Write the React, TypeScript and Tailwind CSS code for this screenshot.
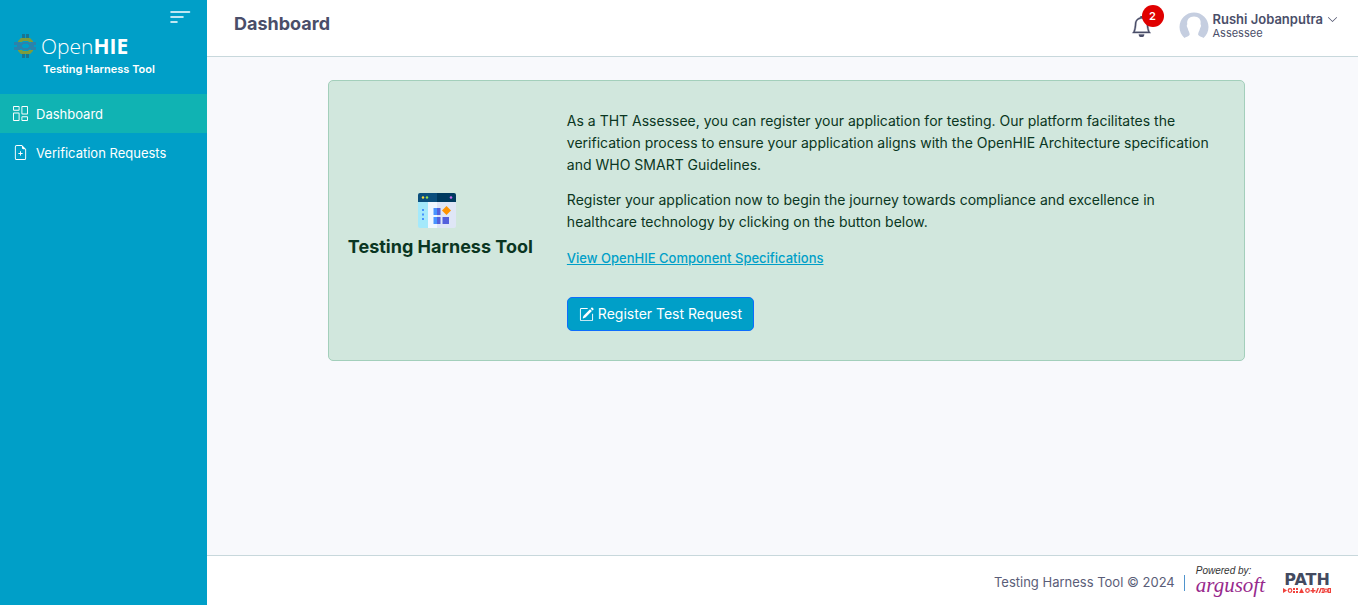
import React from "react";
import {
  BsBell,
  BsChevronDown,
  BsColumnsGap,
  BsFileEarmarkPlus,
  BsPencilSquare,
} from "react-icons/bs";

function WeaveMark() {
  return (
    <svg viewBox="0 0 22 24" className="h-6 w-[22px] shrink-0" aria-hidden="true">
      <g fill="#1b7590">
        <rect x="8" y="0" width="3" height="4" />
        <rect x="12" y="0" width="3" height="4" />
        <rect x="8" y="20" width="3" height="4" />
        <rect x="12" y="20" width="3" height="4" />
      </g>
      <g fill="#2b83ac">
        <path d="M0 8h6v3H0zM0 13h6v3H0zM17 8h5v3h-5zM17 13h5v3h-5z" />
        <path d="M8 8h7v2H8zM8 14h7v2H8zM6 9h3v2H6zM6 13h3v2H6zM14 9h3v2h-3zM14 13h3v2h-3zM3 10h5v4H3zM15 10h5v4h-5z" />
      </g>
      <g fill="#7f9c3c">
        <path d="M7 4h9l3 3v1h-4l-1-1H9L8 8H4V7z" />
        <path d="M7 20h9l3-3v-1h-4l-1 1H9l-1-1H4v1z" />
      </g>
    </svg>
  );
}

function AppWindowIcon() {
  return (
    <svg viewBox="0 0 38 35" className="mr-1.5 h-[35px] w-[38px]" aria-hidden="true">
      <path d="M0 8h10v27H2a2 2 0 0 1-2-2z" fill="#a4e9fb" />
      <path d="M10 8h9v27h-9z" fill="#f0f7ff" />
      <path d="M19 8h19v25a2 2 0 0 1-2 2H19z" fill="#dfe6f6" />
      <path d="M2 0h17v9H0V2a2 2 0 0 1 2-2z" fill="#0b4f7d" />
      <path d="M19 0h17a2 2 0 0 1 2 2v7H19z" fill="#003a5f" />
      <circle cx="5" cy="4.5" r="1.2" fill="#ffd83d" />
      <circle cx="9" cy="4.5" r="1.2" fill="#9be04b" />
      <circle cx="33" cy="4.5" r="1.3" fill="#c86df0" />
      <path d="M4 16h2v2H4zM4 20.500h2v2H4zM4 25h2v2H4z" fill="#4793ff" />
      <path d="M15.500 15H19v7h-3.500zM15.500 24H19v7h-3.500z" fill="#4793ff" />
      <path d="M19 15h3.500v7H19zM19 24h3.500v7H19zM24.500 24h6.500v7h-6.500z" fill="#5460dc" />
      <path d="M28.500 13l4.500 4.500-4.500 4.500-4.500-4.500z" fill="#ff9300" />
    </svg>
  );
}

function Avatar() {
  return (
    <svg viewBox="0 0 30 30" className="size-[30px]" aria-hidden="true">
      <path
        d="M5.500 26C2.500 23.500.5 19.500.5 15a14.500 14.500 0 0 1 29 0c0 4.500-2 8.500-5 11-1.200-1-4-1.600-5.200-3-.7-1 .5-3.400 1.100-4.600.5-1.200.6-1.700.8-2.600.8-.4 1.200-2.800.3-3.500C22.500 7.500 19.500 4.500 15 4.500S7.500 7.500 8.300 12.300c-.9.700-.5 3.100.3 3.500.2.900.3 1.400.8 2.600.6 1.200 1.800 3.600 1.100 4.600-1 1.400-4 2-5 3z"
        fill="#c5cee0"
      />
    </svg>
  );
}

function PathLogo() {
  return (
    <div className="flex w-12 flex-col items-center">
      <span className="font-['DejaVu_Sans',sans-serif] text-[16px] leading-[14px] font-bold text-[#434a60]">
        PATH
      </span>
      <svg viewBox="0 0 48 5" className="mt-px h-[5px] w-12" aria-hidden="true">
        <g fill="#f0423c">
          <path d="M0 0l4 2.500L0 5zM10 0h2v2h-2zM13 0h2v2h-2zM10 3h2v2h-2zM13 3h2v2h-2zM16 5l2.500-5L21 5zM27.500 2h5v1.500h-5zM29.200 0h1.500v5h-1.500zM32.500 5l2-5h1.500l-2 5zM35.500 5l2-5H39l-2 5z" />
        </g>
        <g fill="none" stroke="#f0423c" strokeWidth="1.200">
          <circle cx="7" cy="2.500" r="1.800" />
          <circle cx="24.500" cy="2.500" r="1.800" />
          <path d="M38.500.6h3M38.500 4.400h3M40 .6v3.800" />
          <circle cx="43" cy="2.500" r="1.500" />
          <rect x="45.200" y=".6" width="2.200" height="3.800" />
        </g>
      </svg>
    </div>
  );
}

function Sidebar() {
  return (
    <aside className="flex w-[207px] shrink-0 flex-col bg-[#009fc8] text-white">
      <div className="flex h-[94px] flex-col pl-3.5">
        <button type="button" aria-label="Toggle menu" className="mt-2.5 mr-4 self-end">
          <svg viewBox="0 0 22 14" className="h-3.5 w-[22px]" aria-hidden="true">
            <path
              d="M2 2h18.500M2 7h12M2 12h6"
              stroke="#fff"
              strokeWidth="1.600"
              strokeLinecap="round"
            />
          </svg>
        </button>
        <div className="mt-2.5 flex items-center gap-[5px]">
          <WeaveMark />
          <span className="font-['Open_Sans',sans-serif] text-[21px] leading-6 font-light">
            Open<b className="font-bold">HIE</b>
          </span>
        </div>
        <span className="mt-[3px] ml-[29px] text-[11px] leading-4 font-semibold">
          Testing Harness Tool
        </span>
      </div>
      <nav className="text-[13px] leading-5">
        <a href="#dashboard" className="flex h-[39px] items-center gap-2 bg-[#10b3b3] pl-[13px]">
          <BsColumnsGap className="size-[15px]" />
          Dashboard
        </a>
        <a href="#requests" className="flex h-[39px] items-center gap-2 pl-[13px]">
          <BsFileEarmarkPlus className="size-[15px]" />
          Verification Requests
        </a>
      </nav>
    </aside>
  );
}

function Header() {
  return (
    <header className="flex h-[57px] items-start justify-between border-b border-[#c8d8dc] bg-white pr-5 pl-[27px] text-[#4a4e69]">
      <h1 className="pt-3 text-[18px] leading-6 font-bold">Dashboard</h1>
      <div className="flex items-start">
        <button type="button" aria-label="Notifications" className="relative mt-4 mr-[27px]">
          <BsBell className="size-[21px]" strokeWidth={0.3} />
          <span className="absolute -top-[11px] left-[11px] flex size-[22px] items-center justify-center rounded-full bg-[#e00000] text-[11px] leading-none font-semibold text-white">
            2
          </span>
        </button>
        <button type="button" className="mt-3 flex items-start gap-1 text-left">
          <Avatar />
          <span className="flex flex-col">
            <span className="flex items-center gap-1 text-[13px] leading-[15px] font-semibold">
              Rushi Jobanputra
              <BsChevronDown className="size-[11px]" />
            </span>
            <span className="text-[11px] leading-3">Assessee</span>
          </span>
        </button>
      </div>
    </header>
  );
}

function Footer() {
  return (
    <footer className="flex h-[50px] items-center justify-end border-t border-[#c8d8dc] bg-white pt-1 pr-[27px] text-[13px] text-[#5a5d78]">
      <span>Testing Harness Tool © 2024</span>
      <span className="mx-[9px] h-4 w-px bg-[#4f94cd]" />
      <div className="mr-[18px] flex flex-col pb-1.5 pl-0.5">
        <span className="font-['Liberation_Sans',sans-serif] text-[10px] leading-[10px] text-[#333] italic">
          Powered by:
        </span>
        <span className="font-['Liberation_Serif',serif] text-[21px] leading-[18px] text-[#97298c] italic">
          argusoft
        </span>
      </div>
      <PathLogo />
    </footer>
  );
}

export default function App() {
  return (
    <div className="flex min-h-screen bg-[#f8f9fc] font-['Inter',sans-serif]">
      <Sidebar />
      <div className="flex min-w-0 flex-1 flex-col">
        <Header />
        <main className="flex-1 pt-[23px] pr-[9.8%] pl-[10.5%]">
          <section className="flex items-center rounded-[5px] border border-[#a3cfbb] bg-[#d1e7dd] py-[29px] pr-4 pl-[19px] text-[#0a3622]">
            <div className="flex shrink-0 flex-col items-center pt-2.5">
              <AppWindowIcon />
              <h2 className="mt-[7px] text-[18px] leading-6 font-bold">Testing Harness Tool</h2>
            </div>
            <div className="ml-[34px] flex flex-1 flex-col items-start text-[14px] leading-[22px]">
              <p>
                As a THT Assessee, you can register your application for testing. Our platform
                facilitates the verification process to ensure your application aligns with the
                OpenHIE Architecture specification and WHO SMART Guidelines.
              </p>
              <p className="mt-[13px]">
                Register your application now to begin the journey towards compliance and
                excellence in healthcare technology by clicking on the button below.
              </p>
              <a
                href="#specifications"
                className="mt-3.5 text-[13px] font-medium text-[#009fc8] underline"
              >
                View OpenHIE Component Specifications
              </a>
              <button
                type="button"
                className="mt-7 flex h-[34px] items-center gap-1 rounded-[5px] border border-[#0d6efd] bg-[#009fc8] px-[11px] text-white"
              >
                <BsPencilSquare className="size-[15px]" />
                Register Test Request
              </button>
            </div>
          </section>
        </main>
        <Footer />
      </div>
    </div>
  );
}
